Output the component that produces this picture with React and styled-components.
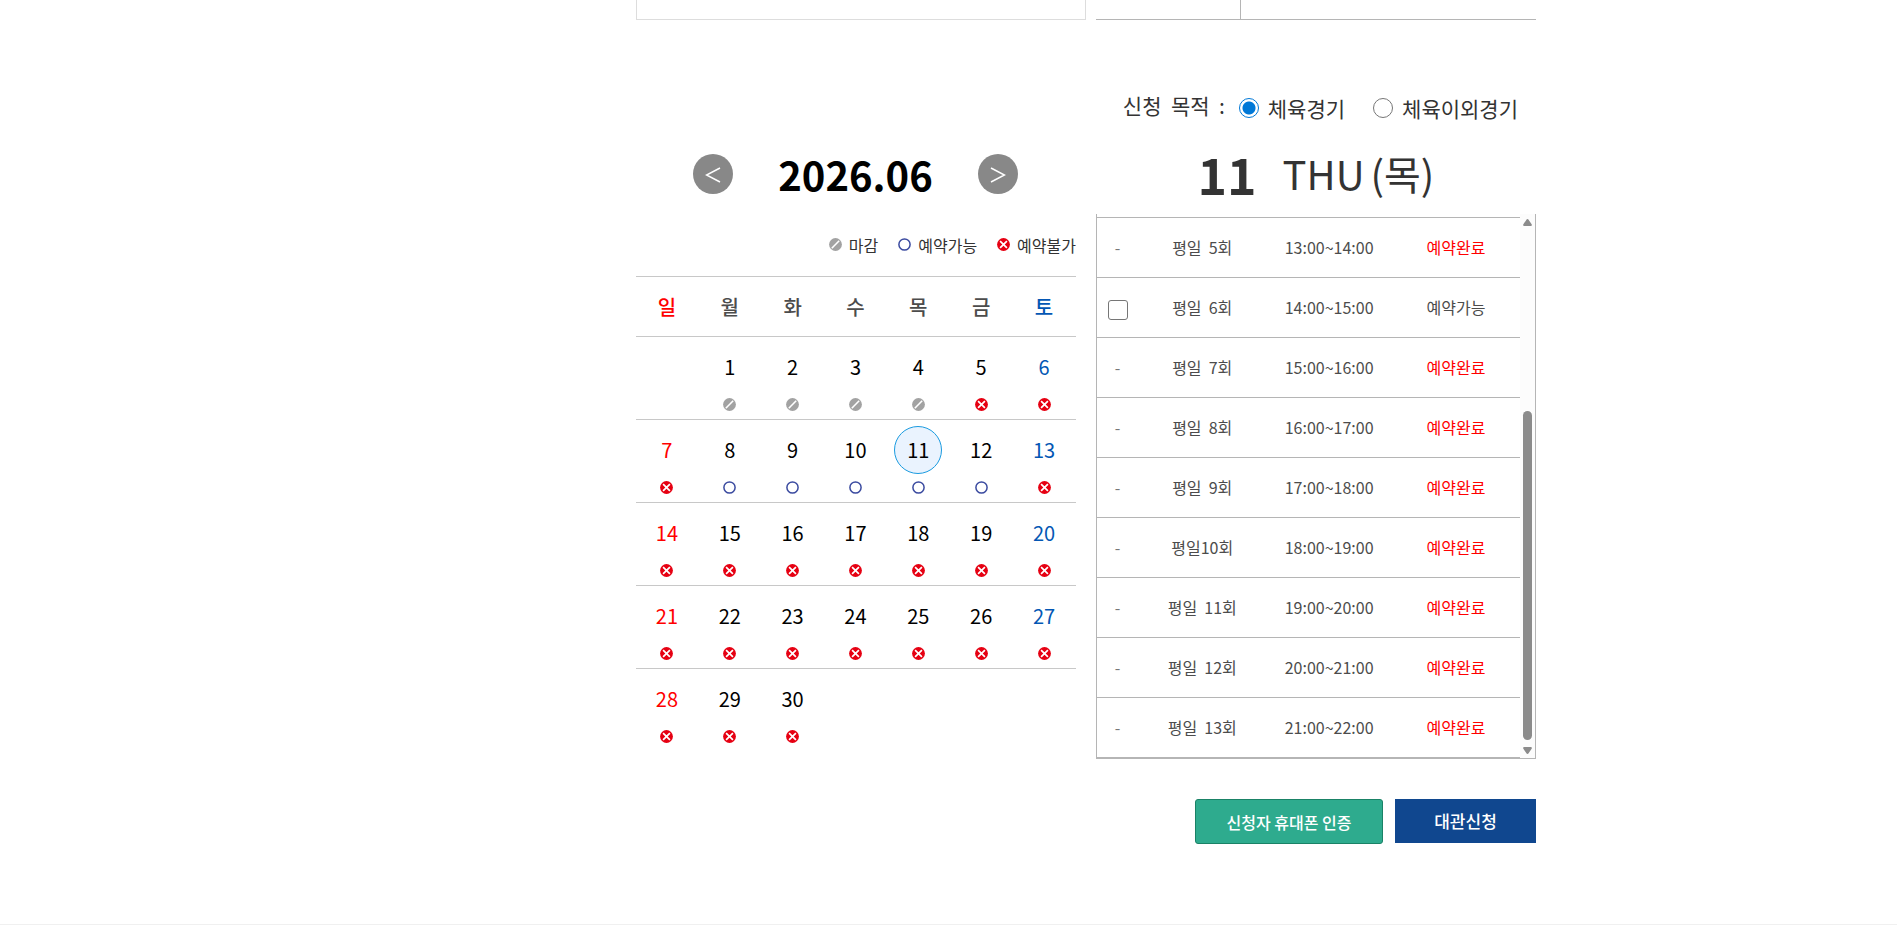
import React, { useState } from "react";
import styled, { createGlobalStyle } from "styled-components";

const GlobalStyle = createGlobalStyle`
  * { box-sizing: border-box; }
  body {
    margin: 0;
    background: #fff;
    color: #333;
    font-family: "Noto Sans CJK KR", "Noto Sans", sans-serif;
    font-size: 16px;
    line-height: 24px;
  }
  button, input { font: inherit; margin: 0; }
  table { border-collapse: collapse; border-spacing: 0; }
`;

const Page = styled.div`
  overflow-x: hidden;
`;

const Container = styled.main`
  max-width: 1175px;
  margin: 0 auto;
  padding: 0 0 80px 275px;
`;

const Summary = styled.div`
  display: grid;
  grid-template-columns: 45fr 44fr;
  gap: 10px;
  height: 20px;
`;

const Photo = styled.div`
  border: 1px solid #ddd;
  border-top: 0;
`;

const InfoTable = styled.div`
  display: flex;
  border-bottom: 1px solid #b5b5b5;
`;

const InfoLabel = styled.div`
  width: 145px;
  border-right: 1px solid #b5b5b5;
`;

const Booking = styled.div`
  display: grid;
  grid-template-columns: 1fr 1fr;
  gap: 20px;
  padding-top: 74px;
`;

const CalendarPane = styled.section`
  padding-top: 60px;
`;

const MonthNav = styled.div`
  display: flex;
  align-items: center;
  justify-content: center;
  gap: 44px;
  height: 40px;
  padding-right: 1px;
`;

const NavButton = styled.button`
  display: flex;
  align-items: center;
  justify-content: center;
  width: 40px;
  height: 40px;
  padding: 0;
  border: 0;
  border-radius: 50%;
  background: #888;
  cursor: pointer;
`;

const MonthTitle = styled.h2`
  width: 157px;
  margin: 0;
  color: #000;
  font-size: 40px;
  font-weight: 700;
  line-height: 40px;
  text-align: center;
`;

const Legend = styled.ul`
  display: flex;
  justify-content: flex-end;
  gap: 20px;
  margin: 0;
  padding: 38px 0 19px;
  list-style: none;
`;

const LegendItem = styled.li`
  display: flex;
  align-items: center;
  gap: 7px;
  height: 25px;
`;

const Calendar = styled.table`
  width: 100%;
  table-layout: fixed;
`;

const dayColor = (day, base) => (day === 0 ? "#f00" : day === 6 ? "#0457b4" : base);

const WeekHead = styled.th`
  height: 60px;
  padding: 0 1px 0 0;
  border-top: 1px solid #c8c8c8;
  border-bottom: 1px solid #c8c8c8;
  color: ${(p) => dayColor(p.$day, "#4c4c4c")};
  font-size: 20px;
  font-weight: 500;
`;

const DayCell = styled.td`
  height: 83px;
  padding: 6px 1px 8px 0;
  border-bottom: ${(p) => (p.$last ? "0" : "1px solid #c8c8c8")};
  vertical-align: top;
`;

const Day = styled.button`
  display: flex;
  align-items: center;
  justify-content: center;
  width: 48px;
  height: 48px;
  margin: 0 auto 7px;
  padding: 0;
  border: 1px solid ${(p) => (p.$selected ? "#1a9be0" : "transparent")};
  border-radius: 50%;
  background: ${(p) => (p.$selected ? "#eaf3fe" : "transparent")};
  color: ${(p) => dayColor(p.$day, "#000")};
  font-size: 20px;
  cursor: pointer;
`;

const StatusIcon = styled.svg`
  display: block;
  width: 13px;
  height: 13px;
  margin: ${(p) => (p.$centered ? "0 auto" : "0")};
`;

const SlotPane = styled.section`
  display: flex;
  flex-direction: column;
`;

const Purpose = styled.fieldset`
  display: flex;
  align-items: center;
  justify-content: flex-end;
  height: 28px;
  margin: 0;
  padding: 0 18px 0 0;
  border: 0;
  font-size: 21px;
`;

const PurposeTitle = styled.span`
  padding: 0 14px 6px 0;
  line-height: 22px;
  white-space: pre;
`;

const RadioLabel = styled.label`
  display: flex;
  align-items: center;
  gap: 9px;

  & + & { margin-left: 28px; }
`;

const Radio = styled.input`
  appearance: none;
  width: 20px;
  height: 20px;
  border: 1px solid #767676;
  border-radius: 50%;
  background: #fff;

  &:checked {
    border-color: #0078d7;
    background: radial-gradient(circle, #0078d7 6px, #fff 7px);
  }
`;

const DateTitle = styled.h2`
  display: flex;
  align-items: center;
  justify-content: center;
  gap: 6px;
  margin: 0;
  padding: 21px 0 11px;
  font-size: 40px;
  font-weight: 400;
  line-height: 60px;
`;

const DateNumber = styled.strong`
  margin-right: 20px;
  font-size: 50px;
  font-weight: 700;
`;

const SlotBox = styled.div`
  display: flex;
  border: 1px solid #b5b5b5;
  border-top: 0;
`;

const SlotTable = styled.table`
  flex: 1;
  margin-top: 3px;
  table-layout: fixed;
  color: #4c4c4c;
`;

const SlotRow = styled.tr`
  height: 60px;
  border-top: 1px solid #b5b5b5;
  border-bottom: 1px solid #b5b5b5;
`;

const SlotCell = styled.td`
  width: ${(p) => (p.$narrow ? "10%" : "30%")};
  padding: 0 1px 2px 0;
  color: ${(p) => (p.$full ? "#f00" : "inherit")};
  text-align: center;
  white-space: pre;
`;

const Dash = styled.span`
  color: #777;
`;

const Check = styled.input`
  appearance: none;
  display: block;
  width: 20px;
  height: 20px;
  margin: 6px auto 0;
  border: 1px solid #767676;
  border-radius: 3px;
  background: #fff;

  &:checked { background: #0078d7; }
`;

const ScrollTrack = styled.div`
  display: flex;
  flex-direction: column;
  align-items: center;
  width: 15px;
  padding: 5px 0 4px;
  background: #fcfcfc;
`;

const ScrollArrow = styled.svg`
  width: 9px;
  height: 7px;
`;

const ScrollThumb = styled.div`
  width: 9px;
  height: 329px;
  margin: auto 0 7px;
  border-radius: 5px;
  background: #8b8b8b;
`;

const Actions = styled.div`
  display: flex;
  align-items: flex-start;
  justify-content: flex-end;
  gap: 12px;
  padding-top: 40px;
`;

const VerifyButton = styled.button`
  width: 188px;
  height: 45px;
  padding: 0;
  border: 1px solid #1a8266;
  border-radius: 3px;
  background: #2eab8e;
  color: #fff;
  font-weight: 500;
  cursor: pointer;
`;

const ApplyButton = styled.button`
  width: 141px;
  height: 44px;
  padding: 0;
  border: 0;
  background: #10478f;
  color: #fff;
  font-size: 17px;
  font-weight: 500;
  cursor: pointer;
`;

const Footer = styled.footer`
  height: 13px;
  border-top: 1px solid #f0f0f0;
`;

function Status({ kind, centered }) {
  return (
    <StatusIcon viewBox="0 0 13 13" $centered={centered} aria-hidden="true">
      {kind === "open" && (
        <circle cx="6.5" cy="6.5" r="5.6" fill="#fff" stroke="#3b4ba0" strokeWidth="1.5" />
      )}
      {kind === "closed" && (
        <>
          <circle cx="6.5" cy="6.5" r="6.4" fill="#a2a2a2" />
          <path d="M2.8 10.2 L10.2 2.8" stroke="#fff" strokeWidth="1.6" />
        </>
      )}
      {kind === "full" && (
        <>
          <circle cx="6.5" cy="6.5" r="6.4" fill="#e60012" />
          <path d="M3.1 3.1 L9.9 9.9 M9.9 3.1 L3.1 9.9" stroke="#fff" strokeWidth="1.7" />
        </>
      )}
    </StatusIcon>
  );
}

const weekdays = ["일", "월", "화", "수", "목", "금", "토"];

const weeks = [0, 1, 2, 3, 4].map((w) =>
  weekdays.map((_, d) => {
    const date = w * 7 + d;
    return date >= 1 && date <= 30 ? date : null;
  })
);

const statusOf = (date) => {
  if (date <= 4) return "closed";
  if (date >= 8 && date <= 12) return "open";
  return "full";
};

const legend = [
  { kind: "closed", text: "마감" },
  { kind: "open", text: "예약가능" },
  { kind: "full", text: "예약불가" },
];

const slots = [
  { name: "평일\u00a0 5회", time: "13:00~14:00" },
  { name: "평일\u00a0 6회", time: "14:00~15:00", open: true },
  { name: "평일\u00a0 7회", time: "15:00~16:00" },
  { name: "평일\u00a0 8회", time: "16:00~17:00" },
  { name: "평일\u00a0 9회", time: "17:00~18:00" },
  { name: "평일10회", time: "18:00~19:00" },
  { name: "평일\u00a0 11회", time: "19:00~20:00" },
  { name: "평일\u00a0 12회", time: "20:00~21:00" },
  { name: "평일\u00a0 13회", time: "21:00~22:00" },
];

export default function App() {
  const [selected, setSelected] = useState(11);

  return (
    <Page>
      <GlobalStyle />
      <Container>
        <Summary>
          <Photo />
          <InfoTable>
            <InfoLabel />
          </InfoTable>
        </Summary>

        <Booking>
          <CalendarPane>
            <MonthNav>
              <NavButton aria-label="이전 달">
                <svg width="16" height="18" viewBox="0 0 16 18" fill="none" stroke="#fff" strokeWidth="1.5">
                  <path d="M15 3 L1.5 10 L15 17" />
                </svg>
              </NavButton>
              <MonthTitle>2026.06</MonthTitle>
              <NavButton aria-label="다음 달">
                <svg width="16" height="18" viewBox="0 0 16 18" fill="none" stroke="#fff" strokeWidth="1.5">
                  <path d="M1 3 L14.5 10 L1 17" />
                </svg>
              </NavButton>
            </MonthNav>

            <Legend>
              {legend.map((item) => (
                <LegendItem key={item.kind}>
                  <Status kind={item.kind} />
                  {item.text}
                </LegendItem>
              ))}
            </Legend>

            <Calendar>
              <thead>
                <tr>
                  {weekdays.map((name, d) => (
                    <WeekHead key={name} $day={d} scope="col">{name}</WeekHead>
                  ))}
                </tr>
              </thead>
              <tbody>
                {weeks.map((week, w) => (
                  <tr key={w}>
                    {week.map((date, d) => (
                      <DayCell key={d} $last={w === weeks.length - 1}>
                        {date && (
                          <>
                            <Day $day={d} $selected={date === selected} onClick={() => setSelected(date)}>
                              {date}
                            </Day>
                            <Status kind={statusOf(date)} centered />
                          </>
                        )}
                      </DayCell>
                    ))}
                  </tr>
                ))}
              </tbody>
            </Calendar>
          </CalendarPane>

          <SlotPane>
            <Purpose>
              <PurposeTitle>{"신청\u00a0 목적\u00a0 :"}</PurposeTitle>
              <RadioLabel>
                <Radio type="radio" name="purpose" defaultChecked />
                체육경기
              </RadioLabel>
              <RadioLabel>
                <Radio type="radio" name="purpose" />
                체육이외경기
              </RadioLabel>
            </Purpose>

            <DateTitle>
              <DateNumber>11</DateNumber>
              <span>THU</span>
              <span>(목)</span>
            </DateTitle>

            <SlotBox>
              <SlotTable>
                <tbody>
                  {slots.map((slot) => (
                    <SlotRow key={slot.time}>
                      <SlotCell $narrow>
                        {slot.open ? <Check type="checkbox" aria-label={slot.name} /> : <Dash>-</Dash>}
                      </SlotCell>
                      <SlotCell>{slot.name}</SlotCell>
                      <SlotCell>{slot.time}</SlotCell>
                      <SlotCell $full={!slot.open}>{slot.open ? "예약가능" : "예약완료"}</SlotCell>
                    </SlotRow>
                  ))}
                </tbody>
              </SlotTable>
              <ScrollTrack aria-hidden="true">
                <ScrollArrow viewBox="0 0 9 7" fill="#8b8b8b">
                  <path d="M4.5 0 Q5.2 0 5.6 .7 L8.8 5.6 Q9 7 8 7 H1 Q0 7 .2 5.6 L3.4 .7 Q3.8 0 4.5 0Z" />
                </ScrollArrow>
                <ScrollThumb />
                <ScrollArrow viewBox="0 0 9 7" fill="#8b8b8b">
                  <path d="M4.5 7 Q5.2 7 5.6 6.3 L8.8 1.4 Q9 0 8 0 H1 Q0 0 .2 1.4 L3.4 6.3 Q3.8 7 4.5 7Z" />
                </ScrollArrow>
              </ScrollTrack>
            </SlotBox>
          </SlotPane>
        </Booking>

        <Actions>
          <VerifyButton>신청자 휴대폰 인증</VerifyButton>
          <ApplyButton>대관신청</ApplyButton>
        </Actions>
      </Container>
      <Footer />
    </Page>
  );
}
